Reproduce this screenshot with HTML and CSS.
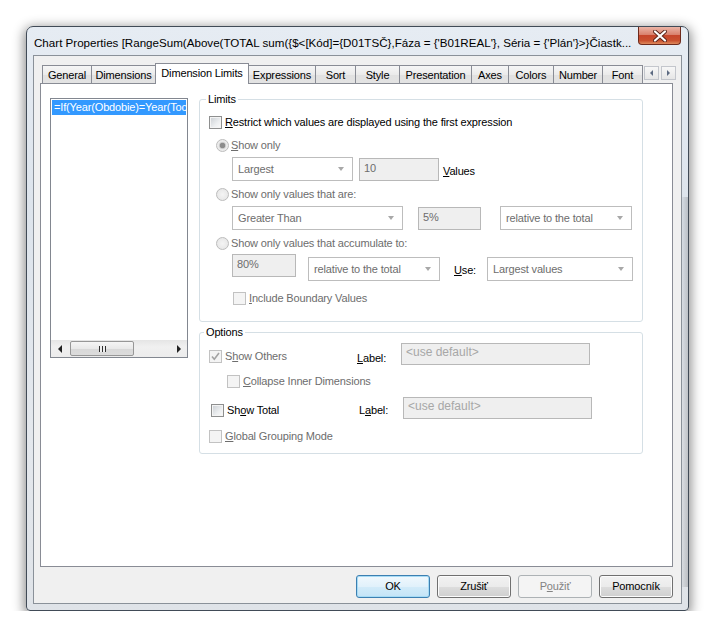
FILE: index.html
```html
<!DOCTYPE html>
<html lang="sk">
<head>
    <meta charset="UTF-8">
    <title>Chart Properties</title>
    <link rel="stylesheet" href="styles.css">
</head>
<body>
    <div class="window">
        <div class="titlebar">
            <span class="title">Chart Properties [RangeSum(Above(TOTAL sum({$&lt;[Kód]={D01TSČ},Fáza = {'B01REAL'}, Séria = {'Plán'}&gt;}Čiastk...</span>
            <div class="close-btn">
                <svg width="14" height="12" viewBox="0 0 14 12">
                    <path d="M2 1.5 L12 10.5 M12 1.5 L2 10.5" stroke="#5a2418" stroke-width="4" stroke-linecap="round"/>
                    <path d="M2 1.5 L12 10.5 M12 1.5 L2 10.5" stroke="#fff" stroke-width="2.2" stroke-linecap="round"/>
                </svg>
            </div>
        </div>
        <div class="client">
            <div class="tabs">
                <div class="tab tab-general">General</div>
                <div class="tab tab-dimensions">Dimensions</div>
                <div class="tab tab-limits active">Dimension Limits</div>
                <div class="tab tab-expressions">Expressions</div>
                <div class="tab tab-sort">Sort</div>
                <div class="tab tab-style">Style</div>
                <div class="tab tab-presentation">Presentation</div>
                <div class="tab tab-axes">Axes</div>
                <div class="tab tab-colors">Colors</div>
                <div class="tab tab-number">Number</div>
                <div class="tab tab-font">Font</div>
                <div class="tab-arrows">
                    <span class="tab-arrow"><i class="tri-left"></i></span>
                    <span class="tab-arrow"><i class="tri-right"></i></span>
                </div>
            </div>
            <div class="panel">
                <div class="dim-list">
                    <div class="dim-items">
                        <div class="dim-item selected">=If(Year(Obdobie)=Year(Toc</div>
                    </div>
                    <div class="hscroll">
                        <span class="sb-btn"><i class="tri-left dark"></i></span>
                        <span class="sb-track">
                            <span class="sb-thumb"><span class="grip"></span></span>
                        </span>
                        <span class="sb-btn"><i class="tri-right dark"></i></span>
                    </div>
                </div>

                <div class="groups">
                    <fieldset class="group group-limits">
                        <legend>Limits</legend>
                        <div class="row r-restrict">
                            <span class="check"></span>
                            <span class="lbl"><u>R</u>estrict which values are displayed using the first expression</span>
                        </div>
                        <div class="row r-option">
                            <span class="radio checked"></span>
                            <span class="lbl off"><u>S</u>how only</span>
                        </div>
                        <div class="row r-fields r-largest">
                            <div class="combo w-largest">Largest<i class="arrow"></i></div>
                            <div class="textbox w-ten">10</div>
                            <span class="lbl values"><u>V</u>alues</span>
                        </div>
                        <div class="row r-option r-gap">
                            <span class="radio"></span>
                            <span class="lbl off">Show only values that are:</span>
                        </div>
                        <div class="row r-fields">
                            <div class="combo w-greater">Greater Than<i class="arrow"></i></div>
                            <div class="textbox w-pct">5%</div>
                            <div class="combo w-relative r-right">relative to the total<i class="arrow"></i></div>
                        </div>
                        <div class="row r-option r-gap">
                            <span class="radio"></span>
                            <span class="lbl off">Show only values that accumulate to:</span>
                        </div>
                        <div class="row r-accum">
                            <div class="textbox w-eighty">80%</div>
                            <div class="combo w-relative r-mid">relative to the total<i class="arrow"></i></div>
                            <span class="lbl use"><u>U</u>se:</span>
                            <div class="combo w-values">Largest values<i class="arrow"></i></div>
                        </div>
                        <div class="row r-boundary">
                            <span class="check off"></span>
                            <span class="lbl off"><u>I</u>nclude Boundary Values</span>
                        </div>
                    </fieldset>

                    <fieldset class="group group-options">
                        <legend>Options</legend>
                        <div class="row o-others">
                            <div class="opt-cell">
                                <span class="check off checked">
                                    <svg width="11" height="11" viewBox="0 0 11 11"><path d="M2 5.5 L4.3 8.2 L9 2" fill="none" stroke="#a3a3a3" stroke-width="1.6"/></svg>
                                </span>
                                <span class="lbl off">S<u>h</u>ow Others</span>
                            </div>
                            <span class="lbl field-lbl"><u>L</u>abel:</span>
                            <div class="textbox w-label">&lt;use default&gt;</div>
                        </div>
                        <div class="row o-collapse">
                            <span class="check off"></span>
                            <span class="lbl off"><u>C</u>ollapse Inner Dimensions</span>
                        </div>
                        <div class="row o-total">
                            <div class="opt-cell">
                                <span class="check"></span>
                                <span class="lbl">Sh<u>o</u>w Total</span>
                            </div>
                            <span class="lbl field-lbl">L<u>a</u>bel:</span>
                            <div class="textbox w-label">&lt;use default&gt;</div>
                        </div>
                        <div class="row o-global">
                            <span class="check off"></span>
                            <span class="lbl off"><u>G</u>lobal Grouping Mode</span>
                        </div>
                    </fieldset>
                </div>
            </div>
            <div class="buttons">
                <div class="btn default">OK</div>
                <div class="btn">Zrušiť</div>
                <div class="btn disabled">P<u>o</u>užiť</div>
                <div class="btn">Pomocník</div>
            </div>
        </div>
    </div>
</body>
</html>
```

FILE: styles.css
```css
body {
    margin: 0;
    background: #fff;
    font-family: "Liberation Sans", Arial, sans-serif;
    font-size: 11px;
    letter-spacing: -0.15px;
    color: #000;
}
.window {
    margin: 26px 0 0 26px;
    width: 663px;
    height: 585px;
    box-sizing: border-box;
    border: 1px solid #414b57;
    border-radius: 7px 7px 4px 4px;
    background:
        linear-gradient(90deg, rgba(0, 0, 0, 0.04), rgba(0, 0, 0, 0.16)) no-repeat right 0 top 170px / 6px 390px,
        linear-gradient(#e6ecf3, #dde4ec 30%, #e4e8ed 70%, #dfe3e8);
    box-shadow: 0 3px 12px 2px rgba(0, 0, 0, 0.45);
}
.titlebar {
    display: flex;
    justify-content: space-between;
    align-items: flex-start;
    height: 28px;
    padding-left: 7px;
}
.title {
    padding-top: 8px;
    line-height: 15px;
    font-size: 11.6px;
    letter-spacing: 0;
    white-space: nowrap;
    overflow: hidden;
}
.close-btn {
    flex: none;
    display: flex;
    justify-content: center;
    align-items: center;
    width: 43px;
    height: 18px;
    margin-right: 7px;
    box-sizing: border-box;
    border: 1px solid #6e2a1c;
    border-top: none;
    border-radius: 0 0 4px 4px;
    background: linear-gradient(#ebb4a6, #d9826d 45%, #c6462b 50%, #c9512f 80%, #de8a5c);
}
.client {
    margin: 0 6px;
    height: 549px;
    box-sizing: border-box;
    border: 1px solid #8a9199;
    background: #f0f0f0;
    padding: 7px 8px 5px 6px;
}

/* tabs */
.tabs {
    display: flex;
    align-items: flex-end;
    height: 20px;
    padding-left: 2px;
    position: relative;
    z-index: 1;
}
.tab {
    flex: none;
    box-sizing: border-box;
    height: 18px;
    margin-right: -1px;
    border: 1px solid #898c95;
    border-bottom: none;
    background: linear-gradient(#f6f6f6, #ebebeb 50%, #e1e1e1 51%, #e3e3e3);
    text-align: center;
    line-height: 18px;
    white-space: nowrap;
}
.tab.active {
    height: 21px;
    margin-bottom: -1px;
    background: #fff;
    line-height: 18px;
    position: relative;
}
.tab-general { width: 50px; }
.tab-dimensions { width: 65px; }
.tab-limits { width: 94px; }
.tab-expressions { width: 68px; }
.tab-sort { width: 41px; }
.tab-style { width: 45px; }
.tab-presentation { width: 73px; }
.tab-axes { width: 38px; }
.tab-colors { width: 46px; }
.tab-number { width: 50px; }
.tab-font { width: 41px; }
.tab-arrows {
    display: flex;
    gap: 2px;
    margin: 0 0 3px 2px;
}
.tab-arrow {
    display: flex;
    justify-content: center;
    align-items: center;
    width: 15px;
    height: 14px;
    box-sizing: border-box;
    border: 1px solid #c3c6cc;
    background: linear-gradient(#f7f7f7, #e6e6e6);
}
.tri-left, .tri-right {
    display: block;
    width: 0;
    height: 0;
    border-top: 3px solid transparent;
    border-bottom: 3px solid transparent;
}
.tri-left { border-right: 3px solid #5d6b82; }
.tri-right { border-left: 3px solid #5d6b82; }
.tri-left.dark { border-right-color: #222; border-width: 4px; border-left: none; }
.tri-right.dark { border-left-color: #222; border-width: 4px; border-right: none; }

/* panel */
.panel {
    display: flex;
    align-items: flex-start;
    height: 484px;
    box-sizing: border-box;
    border: 1px solid #898c95;
    background: #fff;
    padding: 9px 0 0 9px;
}
.dim-list {
    flex: none;
    display: flex;
    flex-direction: column;
    width: 138px;
    height: 260px;
    margin-top: 5px;
    box-sizing: border-box;
    border: 1px solid #828790;
}
.dim-items {
    flex: 1;
    padding: 1px;
    overflow: hidden;
}
.dim-item {
    height: 15px;
    line-height: 15px;
    padding-left: 2px;
    white-space: nowrap;
    overflow: hidden;
}
.dim-item.selected {
    background: #3399ff;
    color: #fff;
}
.hscroll {
    display: flex;
    height: 17px;
    background: linear-gradient(#e5e5e5, #f0f0f0 40%, #ececec);
}
.sb-btn {
    flex: none;
    display: flex;
    justify-content: center;
    align-items: center;
    width: 17px;
}
.sb-track {
    flex: 1;
    padding: 1px 0 1px 2px;
}
.sb-thumb {
    display: flex;
    justify-content: center;
    align-items: center;
    width: 64px;
    height: 15px;
    box-sizing: border-box;
    border: 1px solid #979797;
    border-radius: 2px;
    background: linear-gradient(#f5f5f5, #e9e9e9 50%, #d8d8d8 51%, #dcdcdc);
}
.grip {
    width: 7px;
    height: 6px;
    background: repeating-linear-gradient(90deg, #2f2f2f 0 1px, #f0f0f0 1px 3px);
}

/* group boxes */
.groups {
    flex: none;
    margin-left: 11px;
    width: 444px;
}
.group {
    margin: 0;
    padding: 0;
    min-width: 0;
    border: 1px solid #d5dfe5;
    border-radius: 3px;
}
.group legend {
    padding: 0 2px;
    margin-left: 6px;
    line-height: 13px;
}
.group-limits { padding-bottom: 15px; }
.group-options {
    width: 442px;
    margin-top: 4px;
    padding-bottom: 9px;
}
.group-options legend { margin-left: 4px; }
.row {
    display: flex;
    align-items: center;
}
.lbl { line-height: 13px; white-space: nowrap; }
.lbl.off { color: #6d6d6d; }
.check + .lbl { margin-left: 3px; }
.radio + .lbl { margin-left: 2px; }

.r-restrict { margin-top: 9px; height: 15px; padding-left: 9px; }
.r-option { margin-top: 8px; height: 15px; padding-left: 16px; }
.r-option.r-gap { margin-top: 6px; }
.r-fields { margin-top: 4px; height: 24px; padding-left: 32px; }
.r-accum {
    margin-top: 3px;
    height: 27px;
    padding-left: 32px;
    align-items: flex-start;
}
.r-accum .combo { margin-top: 3px; }
.r-boundary { margin-top: 10px; height: 15px; padding-left: 33px; }

.o-others { margin-top: 3px; height: 23px; padding-left: 9px; }
.o-collapse { margin-top: 9px; height: 15px; padding-left: 27px; }
.o-total { margin-top: 7px; height: 23px; padding-left: 11px; }
.o-global { margin-top: 10px; height: 15px; padding-left: 9px; }
.opt-cell {
    display: flex;
    align-items: center;
    width: 148px;
    margin-top: 6px;
}
.field-lbl { width: 44px; margin-top: 9px; }
.o-total .field-lbl { margin-top: 6px; }

/* controls */
.check {
    flex: none;
    display: flex;
    justify-content: center;
    align-items: center;
    width: 13px;
    height: 13px;
    box-sizing: border-box;
    border: 1px solid #8e8f8f;
    background: linear-gradient(135deg, #c9cdd2, #eceef0 60%, #fbfbfb);
    box-shadow: inset 0 0 0 1px #f4f4f4;
}
.check.off {
    border-color: #c2c2c2;
    background: #f4f4f4;
    box-shadow: none;
}
.radio {
    flex: none;
    width: 13px;
    height: 13px;
    box-sizing: border-box;
    border: 1px solid #bcbcbc;
    border-radius: 50%;
    background: radial-gradient(circle at 50% 50%, #f4f4f4, #e3e3e3);
}
.radio.checked {
    background: radial-gradient(circle, #8c8c8c 0 2.5px, #c7c7c7 3px, #e9e9e9 4px, #f2f2f2);
}
.combo {
    flex: none;
    display: flex;
    justify-content: space-between;
    align-items: center;
    height: 24px;
    box-sizing: border-box;
    border: 1px solid #bdbdbd;
    background: #fff;
    padding: 0 8px 0 5px;
    color: #6d6d6d;
    white-space: nowrap;
}
.arrow {
    width: 0;
    height: 0;
    border-left: 3.5px solid transparent;
    border-right: 3.5px solid transparent;
    border-top: 4px solid #a8a8a8;
}
.textbox {
    flex: none;
    height: 23px;
    box-sizing: border-box;
    border: 1px solid #b8b8b8;
    background: #efefef;
    padding: 3px 0 0 4px;
    color: #6d6d6d;
    line-height: 13px;
    white-space: nowrap;
}
.w-largest { width: 121px; }
.w-ten { width: 80px; margin-left: 6px; }
.values { margin-left: 4px; margin-top: 4px; }
.w-greater { width: 171px; }
.w-pct { width: 63px; margin-left: 15px; }
.w-relative { width: 132px; }
.r-right { margin-left: 19px; }
.w-eighty { width: 64px; }
.r-mid { margin-left: 12px; }
.use { width: 33px; margin: 10px 0 0 14px; }
.w-values { width: 146px; }
.w-label {
    width: 189px;
    height: 22px;
    font-size: 12px;
    letter-spacing: 0;
    color: #a7a7a7;
    padding-top: 2px;
}

/* bottom buttons */
.buttons {
    display: flex;
    justify-content: flex-end;
    gap: 7px;
    margin-top: 8px;
}
.btn {
    width: 74px;
    height: 23px;
    box-sizing: border-box;
    border: 1px solid #707070;
    border-radius: 3px;
    background: linear-gradient(#f2f2f2, #ebebeb 50%, #dddddd 51%, #cfcfcf);
    box-shadow: inset 0 0 0 1px #fcfcfc;
    text-align: center;
    line-height: 21px;
}
.btn.default {
    border-color: #3c7fb1;
    background: linear-gradient(#f0f8fd, #e1f1fb 50%, #d2ebf9 51%, #c4e4f7);
    box-shadow: inset 0 0 0 1px #a6dbf5;
}
.btn.disabled {
    border-color: #adb2b5;
    background: #f4f4f4;
    box-shadow: none;
    color: #838383;
}
```
